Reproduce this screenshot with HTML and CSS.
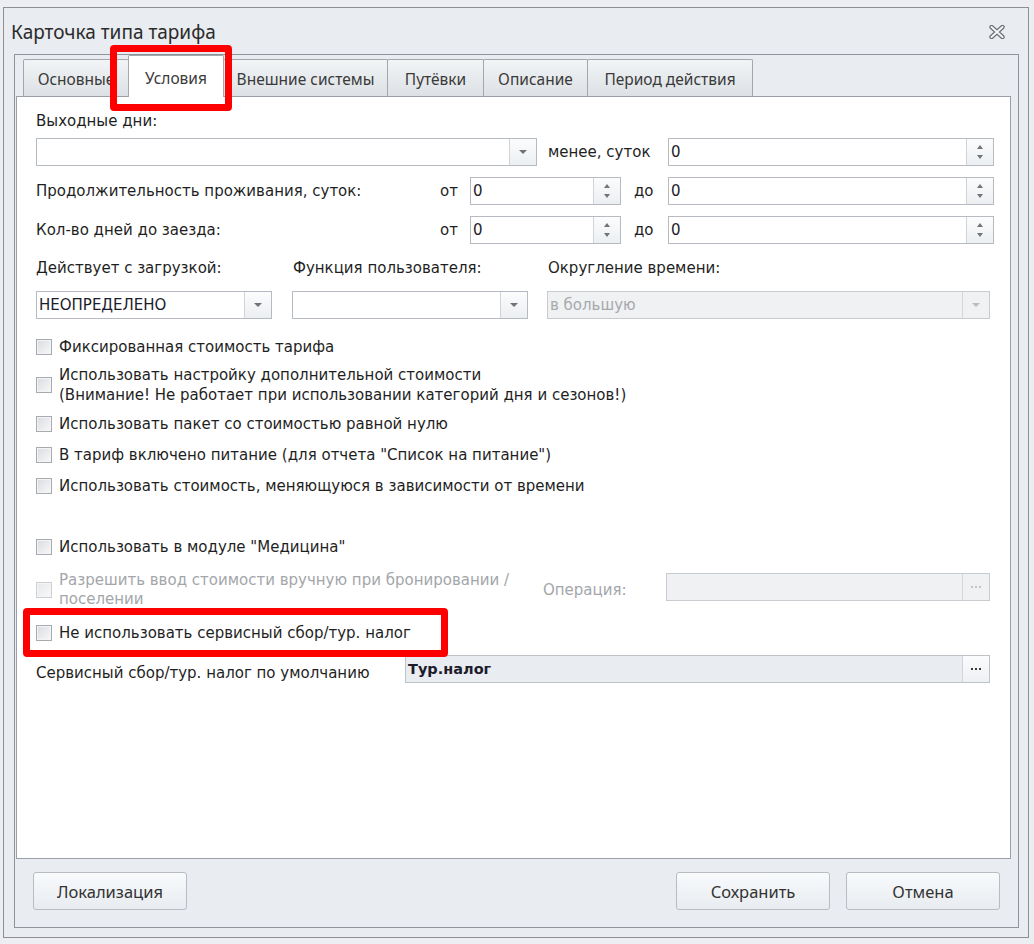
FILE: index.html
```html
<!DOCTYPE html>
<html lang="ru">
<head>
<meta charset="utf-8">
<title>Карточка типа тарифа</title>
<link rel="stylesheet" href="styles.css">
</head>
<body>
<div class="dialog">
  <div class="titlebar">
    <span class="title">Карточка типа тарифа</span>
    <svg class="close" width="16" height="14" viewBox="0 0 16 14">
      <path d="M2.5 2 L13.5 12 M13.5 2 L2.5 12" stroke="#6d7177" stroke-width="4.4" stroke-linecap="round" fill="none"/>
      <path d="M2.5 2 L13.5 12 M13.5 2 L2.5 12" stroke="#f4f5f7" stroke-width="2" stroke-linecap="round" fill="none"/>
    </svg>
  </div>
  <div class="frame">
    <div class="tabs">
      <div class="tab t1">Основные</div>
      <div class="tab t2 active">Условия</div>
      <div class="tab t3">Внешние системы</div>
      <div class="tab t4">Путёвки</div>
      <div class="tab t5">Описание</div>
      <div class="tab t6">Период действия</div>
    </div>
    <div class="page">
      <div class="lbl">Выходные дни:</div>

      <div class="row r1">
        <div class="field w501"><span class="val"></span><span class="btnpart"><i class="arr-down"></i></span></div>
        <span class="lbl mid">менее, суток</span>
        <div class="field w326"><span class="val">0</span><span class="btnpart spin"><i class="arr-up"></i><i class="arr-dn"></i></span></div>
      </div>

      <div class="row r2">
        <span class="lbl long">Продолжительность проживания, суток:</span>
        <span class="lbl ot">от</span>
        <div class="field w151"><span class="val">0</span><span class="btnpart spin"><i class="arr-up"></i><i class="arr-dn"></i></span></div>
        <span class="lbl do">до</span>
        <div class="field w326"><span class="val">0</span><span class="btnpart spin"><i class="arr-up"></i><i class="arr-dn"></i></span></div>
      </div>

      <div class="row r2">
        <span class="lbl long">Кол-во дней до заезда:</span>
        <span class="lbl ot">от</span>
        <div class="field w151"><span class="val">0</span><span class="btnpart spin"><i class="arr-up"></i><i class="arr-dn"></i></span></div>
        <span class="lbl do">до</span>
        <div class="field w326"><span class="val">0</span><span class="btnpart spin"><i class="arr-up"></i><i class="arr-dn"></i></span></div>
      </div>

      <div class="grid3 labels">
        <span class="lbl">Действует с загрузкой:</span>
        <span class="lbl pl1">Функция пользователя:</span>
        <span class="lbl pl1">Округление времени:</span>
      </div>

      <div class="grid3 combos">
        <div class="field w236"><span class="val">НЕОПРЕДЕЛЕНО</span><span class="btnpart"><i class="arr-down"></i></span></div>
        <div class="field w236"><span class="val"></span><span class="btnpart"><i class="arr-down"></i></span></div>
        <div class="field w443 disabled"><span class="val">в большую</span><span class="btnpart"><i class="arr-down"></i></span></div>
      </div>

      <div class="checks">
        <div class="chk h31"><span class="cb"></span><span class="lbl">Фиксированная стоимость тарифа</span></div>
        <div class="chk h46"><span class="cb"></span><span class="lbl two">Использовать настройку дополнительной стоимости<br>(Внимание! Не работает при использовании категорий дня и сезонов!)</span></div>
        <div class="chk h31"><span class="cb"></span><span class="lbl">Использовать пакет со стоимостью равной нулю</span></div>
        <div class="chk h31"><span class="cb"></span><span class="lbl">В тариф включено питание (для отчета "Список на питание")</span></div>
        <div class="chk h31"><span class="cb"></span><span class="lbl">Использовать стоимость, меняющуюся в зависимости от времени</span></div>
        <div class="gap30"></div>
        <div class="chk h31"><span class="cb"></span><span class="lbl">Использовать в модуле "Медицина"</span></div>
        <div class="chk h55 off">
          <div class="chkpart"><span class="cb"></span><span class="lbl two19">Разрешить ввод стоимости вручную при бронировании /<br>поселении</span></div>
          <span class="lbl oper">Операция:</span>
          <div class="field w324 disabled lift"><span class="val"></span><span class="btnpart dots"><i></i><i></i><i></i></span></div>
        </div>
        <div class="chk h31"><span class="cb"></span><span class="lbl">Не использовать сервисный сбор/тур. налог</span></div>
      </div>

      <div class="row last">
        <span class="lbl deflbl">Сервисный сбор/тур. налог по умолчанию</span>
        <div class="field w585 ro"><span class="val bold">Тур.налог</span><span class="btnpart dots dark"><i></i><i></i><i></i></span></div>
      </div>
    </div>
    <div class="footer">
      <div class="btn">Локализация</div>
      <div class="spacer"></div>
      <div class="btn">Сохранить</div>
      <div class="btn">Отмена</div>
    </div>
  </div>
</div>
<div class="hl hl-tab"></div>
<div class="hl hl-chk"></div>
</body>
</html>
```

FILE: styles.css
```css
* { box-sizing: border-box; }
html, body { margin: 0; padding: 0; }
body {
  width: 1034px;
  height: 944px;
  overflow: hidden;
  position: relative;
  background: #eceef1;
  font-family: "DejaVu Sans", "Liberation Sans", sans-serif;
  font-size: 15px;
  color: #1f1f1f;
  padding: 7px 0 0 3px;
}

.dialog {
  width: 1026px;
  height: 931px;
  border: 1px solid #8c9096;
  background: #e9ecf0;
  display: flex;
  flex-direction: column;
}

.titlebar {
  height: 46px;
  flex: none;
  display: flex;
  align-items: center;
  justify-content: space-between;
  padding: 2px 0 0 7px;
}
.title {
  font-family: "Noto Sans", "Liberation Sans", sans-serif;
  font-size: 19px;
  color: #2b2b2b;
}
.close { margin-right: 23px; }

.frame {
  margin-left: 10px;
  width: 1005px;
  height: 874px;
  border: 1px solid #8f949a;
  display: flex;
  flex-direction: column;
}

.tabs {
  height: 41px;
  flex: none;
  display: flex;
  align-items: flex-end;
  padding-left: 8px;
}
.tab {
  height: 37px;
  border: 1px solid #a3a8ae;
  border-bottom: none;
  border-radius: 2px 2px 0 0;
  margin-right: -1px;
  background: linear-gradient(#f2f4f6, #dde1e5);
  display: flex;
  align-items: center;
  justify-content: center;
  padding-top: 2px;
  font-family: "Noto Sans", "Liberation Sans", sans-serif;
  font-size: 15.5px;
  color: #3a3a3a;
  white-space: nowrap;
  overflow: hidden;
}
.tab.active {
  height: 42px;
  margin-bottom: -1px;
  background: #ffffff;
  position: relative;
  z-index: 1;
  padding-top: 3px;
}
.t1 { width: 106px; }
.t2 { width: 96px; }
.t3 { width: 165px; }
.t4 { width: 97px; }
.t5 { width: 105px; }
.t6 { width: 166px; }

.page {
  margin-left: 1px;
  width: 995px;
  height: 763px;
  flex: none;
  border: 1px solid #9aa0a6;
  background: #ffffff;
  padding: 15px 0 0 19px;
}

.lbl { line-height: 18px; white-space: nowrap; }

.row { display: flex; align-items: center; }
.r1 { margin-top: 8px; }
.r2 { margin-top: 11px; }
.mid { width: 131px; padding-left: 11px; }
.long { width: 404px; }
.ot { width: 30px; }
.do { width: 47px; padding-left: 13px; }

.grid3 {
  display: grid;
  grid-template-columns: 256px 255px 443px;
}
.labels { margin-top: 15px; }
.combos { margin-top: 14px; }
.pl1 { padding-left: 1px; }

.field {
  height: 28px;
  border: 1px solid #b6bbc1;
  background: #ffffff;
  display: flex;
  flex: none;
}
.w501 { width: 501px; }
.w326 { width: 326px; }
.w151 { width: 151px; }
.w236 { width: 236px; }
.w443 { width: 443px; }
.w324 { width: 324px; }
.w585 { width: 585px; }

.field .val {
  flex: 1;
  display: flex;
  align-items: center;
  padding-left: 2px;
  color: #1c1c2c;
  white-space: nowrap;
}
.btnpart {
  width: 27px;
  flex: none;
  border-left: 1px solid #d0d4d8;
  background: linear-gradient(#fbfcfd, #eceff2);
  display: flex;
  align-items: center;
  justify-content: center;
}
.arr-down {
  width: 0; height: 0;
  border-left: 4px solid transparent;
  border-right: 4px solid transparent;
  border-top: 4px solid #6f7378;
}
.spin { flex-direction: column; gap: 6px; }
.arr-up {
  width: 0; height: 0;
  border-left: 3.5px solid transparent;
  border-right: 3.5px solid transparent;
  border-bottom: 4px solid #707479;
}
.arr-dn {
  width: 0; height: 0;
  border-left: 3.5px solid transparent;
  border-right: 3.5px solid transparent;
  border-top: 4px solid #707479;
}

.field.disabled { background: #f0f1f2; border-color: #c8ccd0; }
.field.disabled .val { color: #a6a9ad; }
.field.disabled .btnpart { background: #f0f1f2; border-left-color: #d3d6da; }
.field.disabled .arr-down { border-top-color: #b9bcc0; }

.dots { gap: 2px; }
.dots i { width: 2px; height: 2px; background: #c2c5c9; }
.dots.dark i { background: #3a3a3a; }

.field.ro { background: #e9ecf0; border-color: #bfc3c8; }
.field.ro .btnpart { background: linear-gradient(#fbfcfd, #eef0f3); }
.bold { font-weight: bold; color: #222222; font-size: 14.5px; }

.checks { margin-top: 12px; display: flex; flex-direction: column; }
.chk { display: flex; align-items: center; }
.h31 { height: 31px; }
.h46 { height: 46px; }
.h55 { height: 55px; }
.gap30 { height: 30px; }
.two { line-height: 20px; }
.two19 { line-height: 19px; }
.cb {
  width: 16px;
  height: 16px;
  flex: none;
  margin-right: 7px;
  border: 1px solid #a7abb0;
  background: linear-gradient(135deg, #d9dce0, #f7f8f9);
  box-shadow: inset 0 0 0 1px #f3f4f5;
}
.chkpart { width: 507px; display: flex; align-items: center; }
.off .lbl { color: #a3a6aa; }
.off .cb { border-color: #cdd0d4; background: linear-gradient(135deg, #e6e8ea, #f8f9fa); }
.oper { width: 123px; }
.lift { margin-bottom: 6px; }

.last { margin-top: 7px; }
.deflbl { width: 369px; padding-top: 8px; }

.footer {
  flex: 1;
  display: flex;
  align-items: flex-start;
  gap: 16px;
  padding: 13px 18px 0 18px;
}
.spacer { flex: 1; }
.btn {
  width: 154px;
  height: 38px;
  border: 1px solid #b8bdc3;
  border-radius: 3px;
  background: linear-gradient(#f8fafc, #e8ecf0);
  display: flex;
  align-items: center;
  justify-content: center;
  font-family: "Noto Sans", "Liberation Sans", sans-serif;
  font-size: 16.5px;
  color: #333333;
}

.hl {
  position: absolute;
  border: 7px solid #ff0000;
  border-radius: 4px;
  z-index: 5;
}
.hl-tab { left: 110px; top: 45px; width: 122px; height: 66px; }
.hl-chk { left: 23px; top: 608px; width: 425px; height: 49px; }
```
